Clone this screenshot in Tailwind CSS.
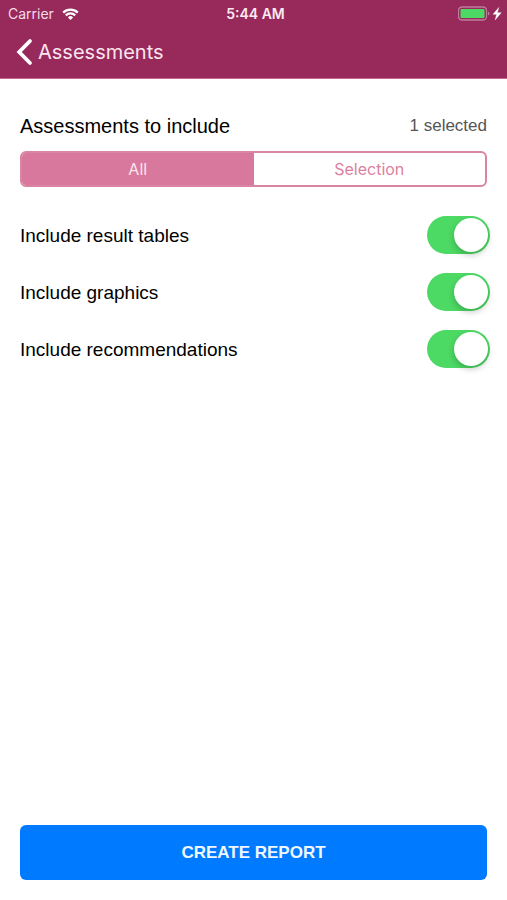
<!DOCTYPE html>
<html lang="en">
<head>
<meta charset="utf-8">
<meta name="viewport" content="width=device-width, initial-scale=1">
<title>Assessments</title>
<script src="https://cdn.jsdelivr.net/npm/@tailwindcss/browser@4"></script>
</head>
<body class="flex min-h-screen flex-col bg-white font-['Liberation_Sans',Arial,sans-serif] text-black">
  <header class="border-b border-[#c76a98] bg-[#97295b] font-[Inter,sans-serif] text-white">
    <div class="grid h-7 grid-cols-3 items-center pr-1 pl-2 text-sm">
      <div class="flex items-center gap-2 text-[#f5dce8]">
        <span>Carrier</span>
        <svg class="h-3 w-[17px]" viewBox="0 0 16 12" fill="none" stroke="white" stroke-width="2.2" aria-label="Wi-Fi">
          <path d="M.7 4.6a10.4 10.4 0 0 1 14.6 0"/>
          <path d="M3.3 7.4a6.7 6.7 0 0 1 9.4 0"/>
          <path d="M8 12 5.4 9.4a3.7 3.7 0 0 1 5.2 0Z" fill="white" stroke="none"/>
        </svg>
      </div>
      <time class="text-center font-semibold text-[#fbeaf2]">5:44 AM</time>
      <svg class="h-4 w-[45px] justify-self-end" viewBox="0 0 45 16" aria-label="Battery charging">
        <rect x=".5" y="1" width="28" height="13" rx="3.5" fill="none" stroke="#bd7c9b" stroke-width="1.3"/>
        <rect x="2.5" y="3" width="24" height="9" rx="1" fill="#4cd964"/>
        <path d="M30 5.5v4q1.5-.5 1.5-2t-1.5-2Z" fill="#bd7c9b"/>
        <path d="M40.8 1.5 35 8.3h3.6l-1.4 5.6 6-7.2h-3.8Z" fill="white" stroke="white" stroke-width=".4"/>
      </svg>
    </div>
    <nav class="flex h-[50px] items-start pt-[10px] pl-4">
      <a href="#" class="flex items-center gap-1 text-xl leading-7 text-[#fbe4ef]">
        <svg class="h-7 w-[18px]" viewBox="0 0 18 28" fill="none" stroke="white" stroke-width="3.8" stroke-linecap="round" stroke-linejoin="miter" aria-hidden="true"><path d="M14 3 3.2 14 14 25"/></svg>
        Assessments
      </a>
    </nav>
  </header>

  <main class="flex flex-1 flex-col px-5 pb-5">
    <div class="flex items-center justify-between pt-[33px]">
      <h1 id="scope-title" class="text-[20px] leading-7">Assessments to include</h1>
      <span class="text-[17px] leading-7 text-[#555]">1 selected</span>
    </div>

    <div role="radiogroup" aria-labelledby="scope-title" class="mt-[11px] grid h-9 grid-cols-2 rounded-md border-2 border-[#da84a4] font-[Inter,sans-serif] text-base text-[#dc7fa1]">
      <label class="relative flex cursor-pointer items-center justify-center rounded-l-sm has-checked:bg-[#d8789c] has-checked:text-[#fbe4ec]">
        <input type="radio" name="scope" value="all" class="absolute inset-0 cursor-pointer appearance-none" checked>All
      </label>
      <label class="relative flex cursor-pointer items-center justify-center rounded-r-sm has-checked:bg-[#d8789c] has-checked:text-[#fbe4ec]">
        <input type="radio" name="scope" value="selection" class="absolute inset-0 cursor-pointer appearance-none">Selection
      </label>
    </div>

    <div class="-mr-[3px] mt-[29px] flex flex-col gap-[19px] text-[19px]">
      <div class="flex items-center justify-between">
        <label for="tables" class="pt-0.5">Include result tables</label>
        <input id="tables" type="checkbox" role="switch" checked class="flex h-[38px] w-[63px] cursor-pointer appearance-none items-center rounded-full bg-[#e5e5ea] p-0.5 before:size-[34px] before:rounded-full before:bg-white before:shadow-[0_3px_6px_rgba(0,0,0,0.22)] checked:justify-end checked:bg-[#4cd964]">
      </div>
      <div class="flex items-center justify-between">
        <label for="graphics" class="pt-0.5">Include graphics</label>
        <input id="graphics" type="checkbox" role="switch" checked class="flex h-[38px] w-[63px] cursor-pointer appearance-none items-center rounded-full bg-[#e5e5ea] p-0.5 before:size-[34px] before:rounded-full before:bg-white before:shadow-[0_3px_6px_rgba(0,0,0,0.22)] checked:justify-end checked:bg-[#4cd964]">
      </div>
      <div class="flex items-center justify-between">
        <label for="recommendations" class="pt-0.5">Include recommendations</label>
        <input id="recommendations" type="checkbox" role="switch" checked class="flex h-[38px] w-[63px] cursor-pointer appearance-none items-center rounded-full bg-[#e5e5ea] p-0.5 before:size-[34px] before:rounded-full before:bg-white before:shadow-[0_3px_6px_rgba(0,0,0,0.22)] checked:justify-end checked:bg-[#4cd964]">
      </div>
    </div>

    <button type="button" class="mt-auto h-[55px] w-full cursor-pointer rounded-md bg-[#007aff] text-[17px] font-bold text-[#eff7ff]">CREATE REPORT</button>
  </main>
</body>
</html>
